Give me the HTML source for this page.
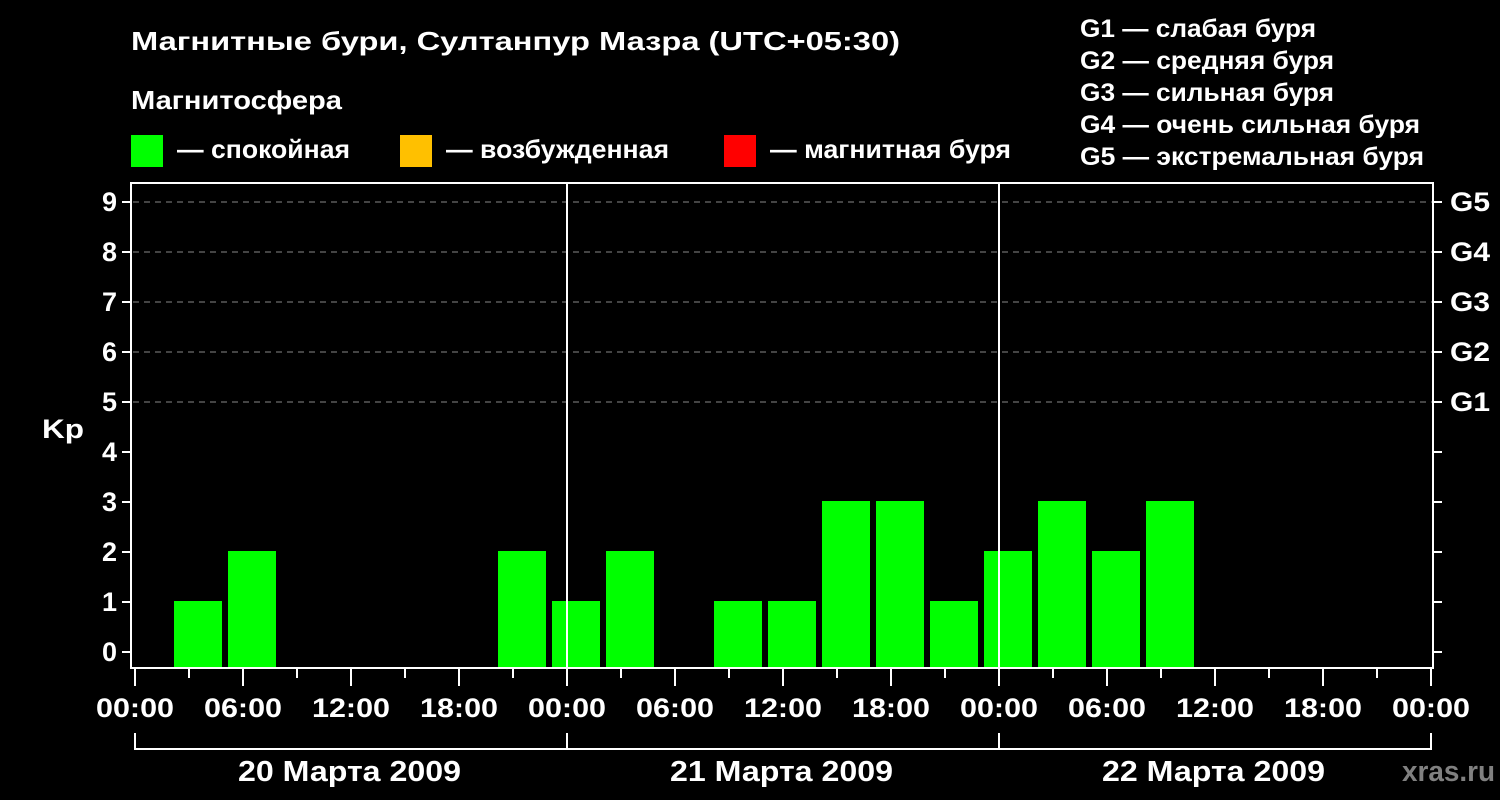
<!DOCTYPE html>
<html><head><meta charset="utf-8"><style>
html,body{margin:0;padding:0;background:#000;width:1500px;height:800px;overflow:hidden}
text{font-family:"Liberation Sans",sans-serif;font-weight:bold;fill:#fff}
</style></head><body>
<svg width="1500" height="800" viewBox="0 0 1500 800" xmlns="http://www.w3.org/2000/svg">
<rect width="1500" height="800" fill="#000"/>
<g lengthAdjust="spacingAndGlyphs">
<text x="131" y="50" font-size="26" textLength="769" lengthAdjust="spacingAndGlyphs">Магнитные бури, Султанпур Мазра (UTC+05:30)</text>
<text x="131" y="109" font-size="26" textLength="211" lengthAdjust="spacingAndGlyphs">Магнитосфера</text>
<rect x="131" y="135" width="32" height="32" fill="#00ff00"/>
<text x="177" y="158" font-size="26" textLength="173" lengthAdjust="spacingAndGlyphs">— спокойная</text>
<rect x="400" y="135" width="32" height="32" fill="#ffc000"/>
<text x="446" y="158" font-size="26" textLength="223" lengthAdjust="spacingAndGlyphs">— возбужденная</text>
<rect x="724" y="135" width="32" height="32" fill="#ff0000"/>
<text x="770" y="158" font-size="26" textLength="241" lengthAdjust="spacingAndGlyphs">— магнитная буря</text>
<g font-size="25">
<text x="1080" y="37" textLength="236" lengthAdjust="spacingAndGlyphs">G1 — слабая буря</text>
<text x="1080" y="69" textLength="254" lengthAdjust="spacingAndGlyphs">G2 — средняя буря</text>
<text x="1080" y="101" textLength="254" lengthAdjust="spacingAndGlyphs">G3 — сильная буря</text>
<text x="1080" y="133" textLength="340" lengthAdjust="spacingAndGlyphs">G4 — очень сильная буря</text>
<text x="1080" y="165" textLength="344" lengthAdjust="spacingAndGlyphs">G5 — экстремальная буря</text>
</g>
</g>
<g stroke="#888" stroke-width="1" stroke-dasharray="6,5">
<line x1="133" x2="1432" y1="202" y2="202"/>
<line x1="133" x2="1432" y1="252" y2="252"/>
<line x1="133" x2="1432" y1="302" y2="302"/>
<line x1="133" x2="1432" y1="352" y2="352"/>
<line x1="133" x2="1432" y1="402" y2="402"/>
</g>
<g fill="#00ff00">
<rect x="174" y="601" width="48" height="67"/>
<rect x="228" y="551" width="48" height="117"/>
<rect x="498" y="551" width="48" height="117"/>
<rect x="552" y="601" width="48" height="67"/>
<rect x="606" y="551" width="48" height="117"/>
<rect x="714" y="601" width="48" height="67"/>
<rect x="768" y="601" width="48" height="67"/>
<rect x="822" y="501" width="48" height="167"/>
<rect x="876" y="501" width="48" height="167"/>
<rect x="930" y="601" width="48" height="67"/>
<rect x="984" y="551" width="48" height="117"/>
<rect x="1038" y="501" width="48" height="167"/>
<rect x="1092" y="551" width="48" height="117"/>
<rect x="1146" y="501" width="48" height="167"/>
</g>
<rect x="131" y="183" width="1302" height="485" fill="none" stroke="#fff" stroke-width="2"/>
<line x1="567" x2="567" y1="183" y2="668" stroke="#fff" stroke-width="2"/>
<line x1="999" x2="999" y1="183" y2="668" stroke="#fff" stroke-width="2"/>
<g stroke="#fff" stroke-width="2">
<line x1="122" x2="131" y1="202" y2="202"/><line x1="122" x2="131" y1="252" y2="252"/>
<line x1="122" x2="131" y1="302" y2="302"/><line x1="122" x2="131" y1="352" y2="352"/>
<line x1="122" x2="131" y1="402" y2="402"/><line x1="122" x2="131" y1="452" y2="452"/>
<line x1="122" x2="131" y1="502" y2="502"/><line x1="122" x2="131" y1="552" y2="552"/>
<line x1="122" x2="131" y1="602" y2="602"/><line x1="122" x2="131" y1="652" y2="652"/>
<line x1="1433" x2="1442" y1="202" y2="202"/><line x1="1433" x2="1442" y1="252" y2="252"/>
<line x1="1433" x2="1442" y1="302" y2="302"/><line x1="1433" x2="1442" y1="352" y2="352"/>
<line x1="1433" x2="1442" y1="402" y2="402"/><line x1="1433" x2="1442" y1="452" y2="452"/>
<line x1="1433" x2="1442" y1="502" y2="502"/><line x1="1433" x2="1442" y1="552" y2="552"/>
<line x1="1433" x2="1442" y1="602" y2="602"/><line x1="1433" x2="1442" y1="652" y2="652"/>
</g>
<g font-size="27" text-anchor="end">
<text x="117" y="211">9</text><text x="117" y="261">8</text><text x="117" y="311">7</text>
<text x="117" y="361">6</text><text x="117" y="411">5</text><text x="117" y="461">4</text>
<text x="117" y="511">3</text><text x="117" y="561">2</text><text x="117" y="611">1</text>
<text x="117" y="661">0</text>
</g>
<text x="42" y="438" font-size="27" textLength="42" lengthAdjust="spacingAndGlyphs">Kp</text>
<g font-size="27">
<text x="1450" y="211" textLength="40" lengthAdjust="spacingAndGlyphs">G5</text><text x="1450" y="261" textLength="40" lengthAdjust="spacingAndGlyphs">G4</text><text x="1450" y="311" textLength="40" lengthAdjust="spacingAndGlyphs">G3</text>
<text x="1450" y="361" textLength="40" lengthAdjust="spacingAndGlyphs">G2</text><text x="1450" y="411" textLength="40" lengthAdjust="spacingAndGlyphs">G1</text>
</g>
<g stroke="#fff" stroke-width="2">
<line x1="135" x2="135" y1="669" y2="686"/><line x1="189" x2="189" y1="669" y2="678"/>
<line x1="243" x2="243" y1="669" y2="686"/><line x1="297" x2="297" y1="669" y2="678"/>
<line x1="351" x2="351" y1="669" y2="686"/><line x1="405" x2="405" y1="669" y2="678"/>
<line x1="459" x2="459" y1="669" y2="686"/><line x1="513" x2="513" y1="669" y2="678"/>
<line x1="567" x2="567" y1="669" y2="686"/><line x1="621" x2="621" y1="669" y2="678"/>
<line x1="675" x2="675" y1="669" y2="686"/><line x1="729" x2="729" y1="669" y2="678"/>
<line x1="783" x2="783" y1="669" y2="686"/><line x1="837" x2="837" y1="669" y2="678"/>
<line x1="891" x2="891" y1="669" y2="686"/><line x1="945" x2="945" y1="669" y2="678"/>
<line x1="999" x2="999" y1="669" y2="686"/><line x1="1053" x2="1053" y1="669" y2="678"/>
<line x1="1107" x2="1107" y1="669" y2="686"/><line x1="1161" x2="1161" y1="669" y2="678"/>
<line x1="1215" x2="1215" y1="669" y2="686"/><line x1="1269" x2="1269" y1="669" y2="678"/>
<line x1="1323" x2="1323" y1="669" y2="686"/><line x1="1377" x2="1377" y1="669" y2="678"/>
<line x1="1431" x2="1431" y1="669" y2="686"/>
</g>
<g font-size="27">
<text x="96" y="717" textLength="78" lengthAdjust="spacingAndGlyphs">00:00</text>
<text x="204" y="717" textLength="78" lengthAdjust="spacingAndGlyphs">06:00</text>
<text x="312" y="717" textLength="78" lengthAdjust="spacingAndGlyphs">12:00</text>
<text x="420" y="717" textLength="78" lengthAdjust="spacingAndGlyphs">18:00</text>
<text x="528" y="717" textLength="78" lengthAdjust="spacingAndGlyphs">00:00</text>
<text x="636" y="717" textLength="78" lengthAdjust="spacingAndGlyphs">06:00</text>
<text x="744" y="717" textLength="78" lengthAdjust="spacingAndGlyphs">12:00</text>
<text x="852" y="717" textLength="78" lengthAdjust="spacingAndGlyphs">18:00</text>
<text x="960" y="717" textLength="78" lengthAdjust="spacingAndGlyphs">00:00</text>
<text x="1068" y="717" textLength="78" lengthAdjust="spacingAndGlyphs">06:00</text>
<text x="1176" y="717" textLength="78" lengthAdjust="spacingAndGlyphs">12:00</text>
<text x="1284" y="717" textLength="78" lengthAdjust="spacingAndGlyphs">18:00</text>
<text x="1392" y="717" textLength="78" lengthAdjust="spacingAndGlyphs">00:00</text>
</g>
<g stroke="#fff" stroke-width="2" fill="none">
<path d="M135 733V749H1431V733"/>
<line x1="567" x2="567" y1="733" y2="749"/>
<line x1="999" x2="999" y1="733" y2="749"/>
</g>
<g font-size="29">
<text x="238" y="781" textLength="223" lengthAdjust="spacingAndGlyphs">20 Марта 2009</text>
<text x="670" y="781" textLength="223" lengthAdjust="spacingAndGlyphs">21 Марта 2009</text>
<text x="1102" y="781" textLength="223" lengthAdjust="spacingAndGlyphs">22 Марта 2009</text>
</g>
<text x="1402" y="781" font-size="29" textLength="93" lengthAdjust="spacingAndGlyphs" style="fill:#808080">xras.ru</text>
</svg>
</body></html>
